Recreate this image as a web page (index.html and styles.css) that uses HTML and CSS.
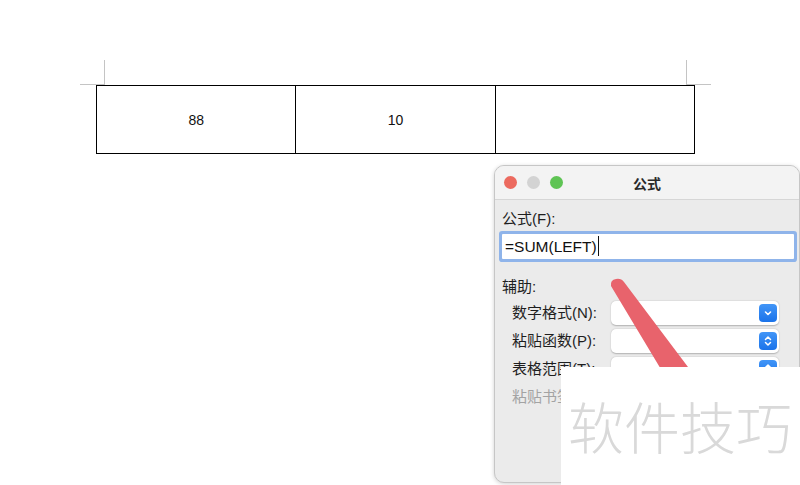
FILE: index.html
```html
<!DOCTYPE html>
<html>
<head>
    <title>公式</title>
    <link rel="stylesheet" href="styles.css">
</head>
<body>
    <div class="page">
        <div class="marks">
            <div class="mark mark-left"></div>
            <div class="mark mark-right"></div>
        </div>
        <table class="doc-table">
            <tr>
                <td>88</td>
                <td>10</td>
                <td></td>
            </tr>
        </table>
    </div>

    <div class="dialog">
        <div class="titlebar">
            <div class="lights">
                <span class="light red"></span>
                <span class="light gray"></span>
                <span class="light green"></span>
            </div>
            <div class="title">公式</div>
            <div></div>
        </div>
        <div class="dialog-body">
            <div class="label">公式(F):</div>
            <div class="formula-input">=SUM(LEFT)<span class="caret"></span></div>
            <div class="label section">辅助:</div>
            <div class="field-row">
                <span class="field-label">数字格式(N):</span>
                <div class="select">
                    <span class="select-btn">
                        <svg width="10" height="10" viewBox="0 0 10 10"><path d="M2.5 4 L5 6.5 L7.5 4" fill="none" stroke="#fff" stroke-width="1.6" stroke-linecap="round" stroke-linejoin="round"/></svg>
                    </span>
                </div>
            </div>
            <div class="field-row">
                <span class="field-label">粘贴函数(P):</span>
                <div class="select">
                    <span class="select-btn">
                        <svg width="10" height="12" viewBox="0 0 10 12"><path d="M2.5 4.5 L5 2 L7.5 4.5 M2.5 7.5 L5 10 L7.5 7.5" fill="none" stroke="#fff" stroke-width="1.5" stroke-linecap="round" stroke-linejoin="round"/></svg>
                    </span>
                </div>
            </div>
            <div class="field-row">
                <span class="field-label">表格范围(T):</span>
                <div class="select">
                    <span class="select-btn">
                        <svg width="10" height="12" viewBox="0 0 10 12"><path d="M2.5 4.5 L5 2 L7.5 4.5 M2.5 7.5 L5 10 L7.5 7.5" fill="none" stroke="#fff" stroke-width="1.5" stroke-linecap="round" stroke-linejoin="round"/></svg>
                    </span>
                </div>
            </div>
            <div class="field-label muted">粘贴书签(B):</div>
        </div>
    </div>

    <svg class="arrow" width="90" height="100" viewBox="0 0 90 100">
        <path d="M6 11 Q5 5 11 4 Q16 3 19 7 L86 96 L57 96 Z" fill="#e8636c"/>
    </svg>

    <div class="watermark">软件技巧</div>
</body>
</html>
```

FILE: styles.css
```css
html, body {
    margin: 0;
    overflow: hidden;
}
body {
    width: 800px;
    height: 485px;
    background: #fff;
    font-family: "Liberation Sans", "Noto Sans CJK SC", sans-serif;
    color: #1e1e1e;
}
.page {
    padding-top: 60px;
    margin-left: 80px;
    width: 631px;
}
.marks {
    display: flex;
    justify-content: space-between;
    height: 25px;
}
.mark {
    width: 24px;
    height: 24px;
    border-bottom: 1px solid #c4c4c4;
}
.mark-left {
    border-right: 1px solid #c4c4c4;
}
.mark-right {
    border-left: 1px solid #c4c4c4;
}
.doc-table {
    margin-left: 16px;
    width: 599px;
    border-collapse: collapse;
    border: 1.5px solid #000;
}
.doc-table td {
    width: 33.3%;
    height: 67px;
    padding: 0;
    border: 1px solid #000;
    text-align: center;
    font-size: 14px;
    color: #111;
}

/* dialog window */
.dialog {
    position: absolute;
    left: 494px;
    top: 165px;
    width: 304px;
    height: 316px;
    border: 1px solid #c6c6c6;
    border-radius: 10px;
    background: #ebebeb;
    box-shadow: 0 1px 4px rgba(0, 0, 0, 0.18);
    overflow: hidden;
}
.titlebar {
    display: grid;
    grid-template-columns: 1fr auto 1fr;
    align-items: center;
    height: 33px;
    background: #f3f3f3;
    border-bottom: 1px solid #d6d6d6;
}
.lights {
    display: flex;
    gap: 10px;
    padding-left: 9px;
}
.light {
    width: 13px;
    height: 13px;
    border-radius: 50%;
}
.red { background: #ec6a5f; }
.gray { background: #d3d3d3; }
.green { background: #5fc454; }
.title {
    font-size: 14px;
    font-weight: bold;
    color: #2a2a2a;
}
.dialog-body {
    padding-left: 7px;
    font-size: 15px;
}
.label {
    line-height: 20px;
    margin-top: 9px;
}
.label.section {
    margin-top: 18px;
}
.formula-input {
    margin-top: 5px;
    width: 289px;
    height: 25px;
    padding-left: 3px;
    box-sizing: border-box;
    width: 292px;
    background: #fff;
    line-height: 25px;
    font-size: 15.5px;
    color: #111;
    box-shadow: 0 0 0 3px #8fb4ea;
    border-radius: 1px;
}
.caret {
    display: inline-block;
    width: 0;
    height: 20px;
    border-left: 1.5px solid #111;
    margin-left: 1px;
    vertical-align: -4px;
}
.field-row {
    display: flex;
    align-items: center;
    height: 24px;
    margin-top: 4px;
}
.field-row:first-of-type {
    margin-top: 5px;
}
.field-label {
    width: 99px;
    padding-left: 10px;
    line-height: 20px;
}
.field-label.muted {
    margin-top: 6px;
    color: #a3a3a3;
}
.select {
    width: 168px;
    height: 24px;
    box-sizing: border-box;
    display: flex;
    justify-content: flex-end;
    align-items: center;
    padding-right: 2px;
    background: #fff;
    border-radius: 5px;
    box-shadow: 0 0.5px 1.5px rgba(0, 0, 0, 0.25);
}
.select-btn {
    width: 18px;
    height: 18px;
    border-radius: 4px;
    background: linear-gradient(#4195f7, #1a73ea);
    display: flex;
    align-items: center;
    justify-content: center;
}

/* overlays */
.arrow {
    position: absolute;
    left: 605px;
    top: 275px;
}
.watermark {
    position: absolute;
    left: 561px;
    top: 367px;
    right: 0;
    bottom: 0;
    background: #fff;
    padding: 30px 0 0 7px;
    font-family: "Noto Sans CJK SC", sans-serif;
    font-size: 56px;
    font-weight: 300;
    line-height: 56px;
    color: #d9d9d9;
    white-space: nowrap;
}
```
